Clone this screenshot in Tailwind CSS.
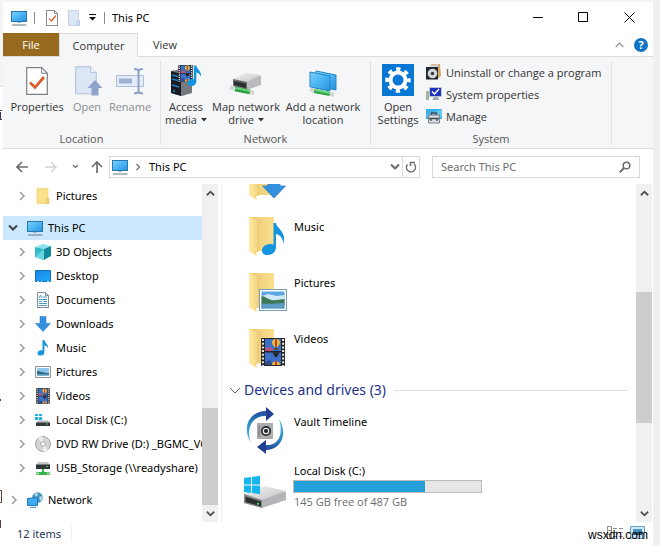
<!DOCTYPE html>
<html lang="en">
<head>
<meta charset="utf-8">
<meta name="viewport" content="width=device-width, initial-scale=1">
<title>This PC</title>
<script src="https://cdn.jsdelivr.net/npm/@tailwindcss/browser@4"></script>
</head>
<body class="flex h-screen overflow-hidden bg-white text-[11px] leading-4 text-black font-['Noto_Sans','Open_Sans',sans-serif]">

<!-- Shared icon definitions -->
<svg class="absolute h-0 w-0" aria-hidden="true">
  <defs>
    <linearGradient id="gScreen" x1="0" y1="0" x2="1" y2="1"><stop offset="0" stop-color="#7fd0fb"/><stop offset=".5" stop-color="#4bb4f3"/><stop offset="1" stop-color="#2391de"/></linearGradient>
    <linearGradient id="gDesk" x1="0" y1="0" x2="1" y2="1"><stop offset="0" stop-color="#1583e6"/><stop offset="1" stop-color="#22a9fb"/></linearGradient>
    <linearGradient id="gFlap" x1="0" x2="1"><stop offset="0" stop-color="#fdeaa8"/><stop offset="1" stop-color="#f4d57d"/></linearGradient>
    <linearGradient id="gBack" x1="0" x2="1"><stop offset="0" stop-color="#e9c871"/><stop offset="1" stop-color="#fae08f"/></linearGradient>
    <linearGradient id="gDisk" x1="0" x2="1" y2="1"><stop offset="0" stop-color="#f2f2f2"/><stop offset="1" stop-color="#c4c4c6"/></linearGradient>
    <linearGradient id="gArcL" x1="0" y1="1" x2="0" y2="0"><stop offset="0" stop-color="#4fc0e6"/><stop offset=".6" stop-color="#2f8fc8"/><stop offset="1" stop-color="#23479a"/></linearGradient>
    <linearGradient id="gArcR" x1="0" y1="0" x2="0" y2="1"><stop offset="0" stop-color="#4fc0e6"/><stop offset=".6" stop-color="#2f8fc8"/><stop offset="1" stop-color="#23479a"/></linearGradient>
    <symbol id="pc" viewBox="0 0 16 16"><rect x=".5" y="1.500" width="15" height="10" fill="url(#gScreen)" stroke="#2878ad"/><path d="M6 12.500h4" stroke="#9db8c8"/><path d="M1 15h14.500" stroke="#7d8a94" stroke-width="1.200"/></symbol>
    <symbol id="folder" viewBox="0 0 16 16"><path d="M2 .5h11v15H2z" fill="#fbe08a" stroke="#ecc968" stroke-width=".6"/><path d="M11.500 10.500h2.500v5h-2.500z" fill="#f5d374" stroke="#e3bd58" stroke-width=".6"/></symbol>
    <symbol id="bigfolder" viewBox="0 0 48 48"><path d="M5 4h25v34H12z" fill="url(#gBack)"/><path d="M5 4l9 4v36l-9-6z" fill="url(#gFlap)"/><path d="M14 8v31" stroke="#e3c069" stroke-width=".7"/><path d="M12 39h4v3l-3 3z" fill="#fff"/></symbol>
    <symbol id="note" viewBox="0 0 16 16"><path d="M7.500 0h1.800c.2 2.600 4.200 4 3.700 8.700-.6-2-1.800-3-3.600-3.400v6.900c0 2.100-1.800 3.400-3.900 3.400-1.800 0-3-1-3-2.400 0-1.700 1.800-3 3.700-3 .5 0 .9.100 1.300.200z" fill="#1493df"/></symbol>
    <symbol id="down" viewBox="0 0 16 16"><path d="M5 .5h6v7h4.500L8 15.500.5 7.500H5z" fill="#3390df" stroke="#2577c0" stroke-width=".5"/></symbol>
    <symbol id="pic" viewBox="0 0 28 22"><rect x=".5" y=".5" width="27" height="21" fill="#fff" stroke="#7a9cb5"/><path d="M2.500 2.500h23v17h-23z" fill="#5aa5e4"/><path d="M2.500 7l7-2 8 2 8-1v8h-23z" fill="#cfe8f6"/><path d="M2.500 7c3 0 6 3 10 4s9-1 13-1v6h-23z" fill="#3c7852"/><path d="M2.500 14.500c8 1 14-.5 23-.5v5.500h-23z" fill="#5c9cc4"/></symbol>
    <symbol id="film" viewBox="0 0 24 28"><path d="M0 0h24v28H0z" fill="#252529"/><path d="M1.900 1v27M22.100 1v27" stroke="#f1edda" stroke-width="2" stroke-dasharray="2 1.700"/><path d="M4 1h16v12H4zM4 14.500h16V27H4z" fill="#3a71c6"/><path d="M4 10l5-1 3 2v2H4z" fill="#b65480"/><path d="M15 1c5 0 5 5 1.500 8h-3C10 6 10 1 15 1z" fill="#e9bd35"/><path d="M14 1.200h2v7.600h-2z" fill="#c23e2c"/><path d="M13.500 10h3v2h-3z" fill="#653c1d"/><path d="M11.500 14.500h7L16 19h-2z" fill="#292520"/><path d="M4 24l5-2 3 5H4z" fill="#2c4a86"/><path d="M11 27c0-5 8-5 8 0z" fill="#e9bd35"/><path d="M14 23h2v4h-2z" fill="#c23e2c"/></symbol>
    <symbol id="chev" viewBox="0 0 8 10"><path d="M2 1l4 4-4 4" fill="none" stroke="currentColor" stroke-width="1.600"/></symbol>
    <symbol id="vee" viewBox="0 0 10 8"><path d="M1 1.500l4 4 4-4" fill="none" stroke="currentColor" stroke-width="2"/></symbol>
    <symbol id="caret" viewBox="0 0 6 4"><path d="M0 0h6L3 3.500z" fill="currentColor"/></symbol>
    <symbol id="page" viewBox="0 0 22 28"><path d="M.7.700h15l5.600 5.600v21H.7z" fill="#fff" stroke="#7b8086" stroke-width="1.200"/><path d="M15.700.700v5.600h5.600" fill="none" stroke="#7b8086"/><path d="M4 15.500l5 5L18 10" fill="none" stroke="#d9602c" stroke-width="2.800"/></symbol>
  </defs>
</svg>

<!-- Sliver of the page behind the window -->
<div class="w-[3px] shrink-0 bg-white" aria-hidden="true">
  <svg width="3" height="546"><path d="M0 0h3v86H0z" fill="#f4f4f5"/><path d="M0 86h3v1H0z" fill="#dcdfe2"/><path d="M0 110h2v1H0zM0 112h1v7h1v1H0z" fill="#46365c"/><path d="M0 399h1v2H0z" fill="#444"/><path d="M0 490.500h1.500v12H0" fill="none" stroke="#5a3f38"/><path d="M0 520h1v8H0z" fill="#5a3f48"/></svg>
</div>

<main class="flex min-w-0 flex-1 flex-col border-t-2 border-[#f4f4f4] bg-white">
  <!-- Title bar -->
  <header class="flex h-[31px] shrink-0 items-center pl-2">
    <svg class="h-4 w-4"><use href="#pc"/></svg>
    <span class="ml-[7px] h-3 w-px bg-[#8a8a8a]"></span>
    <button class="ml-[11px]" aria-label="Properties"><svg class="h-4 w-3" viewBox="0 0 12 16"><path d="M.5.500h8l3 3v12H.500z" fill="#fff" stroke="#8b8b8b"/><path d="M8.500.500v3h3" fill="none" stroke="#8b8b8b"/><path d="M3 8.500l2.500 2.500L10 5.500" fill="none" stroke="#e0673a" stroke-width="1.500"/></svg></button>
    <button class="ml-[10px]" aria-label="New folder"><svg class="h-4 w-3" viewBox="0 0 12 16"><path d="M.5.500h10v15H.500z" fill="#dde6f3" stroke="#c7d4e8"/><path d="M9 10.500h2.500v5H9z" fill="#d2deef" stroke="#bccbe2"/></svg></button>
    <button class="ml-[9px]" aria-label="Customize Quick Access Toolbar"><svg class="h-[7px] w-[7px]" viewBox="0 0 7 7"><path d="M0 .5h7" stroke="#111"/><path d="M0 3h7L3.500 6.500z" fill="#111"/></svg></button>
    <span class="ml-2 h-3 w-px bg-[#8a8a8a]"></span>
    <h1 class="ml-[7px]">This PC</h1>
    <div class="ml-auto flex h-full items-center">
      <button class="flex w-[45px] justify-center" aria-label="Minimize"><svg width="11" height="11"><path d="M0 5.500h10" stroke="#000"/></svg></button>
      <button class="flex w-[45px] justify-center" aria-label="Maximize"><svg width="11" height="11"><path d="M.5.500h9v9h-9z" fill="none" stroke="#000"/></svg></button>
      <button class="flex w-[47px] justify-center" aria-label="Close"><svg width="11" height="11"><path d="M.5.500l10 10M10.500.500l-10 10" stroke="#000"/></svg></button>
    </div>
  </header>

  <!-- Ribbon tabs -->
  <nav class="flex h-[23px] shrink-0 items-stretch text-[#333] font-['Open_Sans','Noto_Sans',sans-serif]">
    <button class="w-14 bg-[#986a1f] text-white">File</button>
    <button class="relative -mb-px w-[79px] border border-b-0 border-[#dadbdc] bg-[#f5f6f7]">Computer</button>
    <button class="w-[54px]">View</button>
    <div class="ml-auto flex items-center gap-[10px] pr-[5px]">
      <button aria-label="Minimize the Ribbon"><svg class="block" width="9" height="6"><path d="M.7 5l3.800-3.800L8.300 5" fill="none" stroke="#8f8f8f" stroke-width="1.200"/></svg></button>
      <button class="h-[14px] w-[14px] rounded-full bg-[#1272c4] text-[11px] leading-[14px] font-bold text-white" aria-label="Help">?</button>
    </div>
  </nav>

  <!-- Ribbon -->
  <section class="flex h-[93px] shrink-0 border-y border-[#dadbdc] bg-[#f5f6f7] pt-1 pb-[3px] leading-[13px] text-[#333] font-['Open_Sans','Noto_Sans',sans-serif]">
    <div class="flex w-[158px] flex-col border-r border-[#e2e3e4]">
      <div class="flex flex-1 pl-[5px]">
        <button class="flex w-[58px] flex-col items-center"><span class="flex h-[39px] items-center"><svg class="h-7 w-[22px]"><use href="#page"/></svg></span>Properties</button>
        <button class="flex w-[42px] flex-col items-center text-[#8b8b8b]"><span class="flex h-[39px] items-center"><svg class="ml-1 h-[30px] w-7" viewBox="0 0 28 30"><path d="M.7.700h15l5.600 5.600v21.500H.7z" fill="#dde6f5" stroke="#b1c0dc"/><path d="M15.700.700v5.600h5.600" fill="#f2f6fc" stroke="#b1c0dc"/><path d="M20 14l7.500 8h-4v7.500h-7V22h-4z" fill="#8ea3ca"/></svg></span>Open</button>
        <button class="flex w-[44px] flex-col items-center text-[#8b8b8b]"><span class="flex h-[39px] items-center"><svg class="h-7 w-7" viewBox="0 0 28 28"><path d="M.5 8.500h27v11H.500z" fill="#e6edf8" stroke="#aebedb"/><path d="M3 11.500h13v5H3z" fill="#9eb2d6"/><path d="M18 2c2.500 0 4 .7 4.500 1.700C23 2.700 24.500 2 27 2M18 26.500c2.500 0 4-.7 4.500-1.700.5 1 2 1.700 4.500 1.700M22.500 3v22" fill="none" stroke="#8fa2c3" stroke-width="2"/></svg></span>Rename</button>
      </div>
      <div class="text-center text-[#555]">Location</div>
    </div>
    <div class="flex w-[210px] flex-col border-r border-[#e2e3e4]">
      <div class="flex flex-1 pl-0.5">
        <button class="flex w-[46px] flex-col items-center"><span class="flex h-[39px] items-center"><svg class="h-8 w-8" viewBox="0 0 32 32"><path d="M1 6l11-2 10 4v20l-10 3-11-3z" fill="#77797e"/><path d="M1 6l10 3v22L1 28z" fill="#171c24"/><path d="M2 10l8 2M2 14l8 2M2 20l7 2" stroke="#237cc4" stroke-width="1.500"/><path d="M3 26h2" stroke="#35cfff"/><svg x="8" y="0" width="15" height="17"><use href="#film"/></svg><svg x="14" y="0" width="21" height="22"><use href="#note"/></svg></svg></span>Access<span class="flex items-center gap-1">media <svg class="h-1 w-1.5"><use href="#caret"/></svg></span></button>
        <button class="flex w-[74px] flex-col items-center"><span class="flex h-[39px] items-center pt-1.5"><svg class="h-6 w-[34px]" viewBox="0 0 34 24"><path d="M4 8L17 2l15 2v9L18 18 4 14z" fill="#b9babd"/><path d="M4 7L17 1l15 2-14 7z" fill="url(#gDisk)"/><path d="M4 7l14 3v8L4 14z" fill="#6b6d6e"/><path d="M5 9l12 2.500v4.500L5 13z" fill="#2c2e2f"/><path d="M6 17l15 3" stroke="#279b42" stroke-width="4.500"/><path d="M6 16l15 3" stroke="#65d077" stroke-width="2"/><path d="M1 15l4 2M21 20l4 1" stroke="#d1d7cf" stroke-width="4"/></svg></span><span class="whitespace-nowrap">Map network</span><span class="flex items-center gap-1">drive <svg class="h-1 w-1.5"><use href="#caret"/></svg></span></button>
        <button class="flex w-[80px] flex-col items-center"><span class="flex h-[39px] items-center pt-1"><svg class="h-7 w-7" viewBox="0 0 28 28"><path d="M7 2l20 4v15L7 17z" fill="url(#gScreen)" stroke="#2787c5"/><path d="M1 3l20 4v15L1 18z" fill="url(#gScreen)" stroke="#2787c5"/><path d="M5 22l16 3" stroke="#2da447" stroke-width="4"/><path d="M6 21l15 3" stroke="#69d77d" stroke-width="2"/><path d="M1 20l4 2M21 25l4 1" stroke="#d1d7cf" stroke-width="4"/></svg></span><span class="whitespace-nowrap">Add a network</span>location</button>
      </div>
      <div class="text-center text-[#555]">Network</div>
    </div>
    <div class="flex w-[241px] flex-col border-r border-[#e2e3e4]">
      <div class="flex flex-1 pl-1">
        <button class="flex w-[46px] flex-col items-center"><span class="h-[39px] pt-[3px]"><svg class="h-8 w-8" viewBox="0 0 32 32"><path d="M0 0h32v32H0z" fill="#0878d4"/><circle cx="16" cy="16" r="7.500" fill="none" stroke="#fff" stroke-width="4"/><circle cx="16" cy="16" r="10.700" fill="none" stroke="#fff" stroke-width="4" stroke-dasharray="4.200 4.200" stroke-dashoffset="2.100"/></svg></span>Open<span>Settings</span></button>
        <div class="flex flex-col pl-[5px]">
          <button class="flex h-[22px] items-center gap-1"><svg class="h-4 w-4" viewBox="0 0 16 16"><path d="M5 0h9l1 12-4 3z" fill="#d9a968"/><path d="M3 2l9-2v12z" fill="#ccd6db"/><path d="M0 3h12v12.500H0z" fill="#24272a"/><circle cx="6.500" cy="9.500" r="4.800" fill="#d4d7d9"/><circle cx="6.500" cy="9.500" r="1.700" fill="#33383b"/></svg><span class="whitespace-nowrap">Uninstall or change a program</span></button>
          <button class="flex h-[22px] items-center gap-1"><svg class="h-4 w-4" viewBox="0 0 16 16"><path d="M0 5h3v9H0z" fill="#a5b29e"/><path d="M3.500 1.500h12v9h-12z" fill="#1e35b8" stroke="#bdc5d1"/><path d="M6 5.500l2.500 2.500L13 3" stroke="#fff" stroke-width="1.500" fill="none"/><path d="M8 11h4l1 3H6z" fill="#a4abb6"/></svg>System properties</button>
          <button class="flex h-[22px] items-center gap-1"><svg class="h-4 w-4" viewBox="0 0 16 16"><path d="M0 1h16v10H0z" fill="#3bb2ed"/><path d="M0 8L16 1v8z" fill="#65caf6"/><path d="M2.500 7h11v8h-11z" fill="#d9dcdf" stroke="#7a848c"/><path d="M5.500 7V5h5v2M3 10.500h10M5 10v3M11 10v3" fill="none" stroke="#434c54" stroke-width="1.300"/></svg>Manage</button>
        </div>
      </div>
      <div class="text-center text-[#555]">System</div>
    </div>
  </section>

  <!-- Address row -->
  <div class="flex h-[35px] shrink-0 items-center pr-[13px] pl-3 text-[#6d6d6d]">
    <button class="ml-px" aria-label="Back"><svg class="h-3 w-3" viewBox="0 0 12 12"><path d="M12 6H1M6 1L1 6l5 5" fill="none" stroke="currentColor" stroke-width="1.700"/></svg></button>
    <button class="ml-[17px] text-[#d4d4d4]" aria-label="Forward" disabled><svg class="h-3 w-3" viewBox="0 0 12 12"><path d="M0 6h11M6 1l5 5-5 5" fill="none" stroke="currentColor" stroke-width="1.500"/></svg></button>
    <button class="ml-[15px]" aria-label="Recent locations"><svg class="h-[5px] w-[7px]"><use href="#vee"/></svg></button>
    <button class="ml-3" aria-label="Up"><svg class="h-3 w-3" viewBox="0 0 12 12"><path d="M6 12V1M1 6l5-5 5 5" fill="none" stroke="currentColor" stroke-width="1.700"/></svg></button>
    <div class="ml-1.5 flex h-[22px] min-w-0 flex-1 items-center border border-[#d9d9d9] pl-0.5">
      <svg class="h-4 w-4"><use href="#pc"/></svg>
      <svg class="ml-[7px] h-2 w-1.5"><use href="#chev"/></svg>
      <button class="ml-2 text-black">This PC</button>
      <button class="mr-0.5 ml-auto" aria-label="Previous locations"><svg class="h-2 w-[10px]"><use href="#vee"/></svg></button>
      <button class="flex h-full w-[17px] items-center justify-center border-l border-[#d9d9d9]" aria-label="Refresh"><svg class="h-3 w-3" viewBox="0 0 12 12"><path d="M2.500 3.500A4.500 4.500 0 1 0 9 3M5.500.800V5M5.500 1.500H10" fill="none" stroke="currentColor" stroke-width="1.500"/></svg></button>
    </div>
    <label class="ml-3 flex h-[22px] w-[208px] items-center border border-[#d9d9d9] px-2">
      <input class="min-w-0 flex-1 outline-none placeholder:text-[#6d6d6d]" type="text" placeholder="Search This PC" aria-label="Search This PC">
      <svg class="h-3 w-3" viewBox="0 0 12 12"><circle cx="7.500" cy="4.500" r="3.300" fill="none" stroke="currentColor" stroke-width="1.500"/><path d="M5 7L.8 11.200" stroke="currentColor" stroke-width="2"/></svg>
    </label>
  </div>

  <div class="flex min-h-0 flex-1">
    <!-- Navigation tree -->
    <nav class="w-[199px] shrink-0 overflow-hidden whitespace-nowrap text-[#a0a0a0]">
      <ul>
        <li class="mb-2"><button class="flex h-6 w-full items-center pl-[15px]"><svg class="h-[10px] w-2 shrink-0"><use href="#chev"/></svg><svg class="mr-[5px] ml-[9px] h-4 w-4 shrink-0"><use href="#folder"/></svg><span class="text-black">Pictures</span></button></li>
        <li><button class="flex h-6 w-full items-center bg-[#cce8ff] pl-[5px]"><svg class="h-2 w-[10px] shrink-0 text-[#404040]"><use href="#vee"/></svg><svg class="mr-[5px] ml-[9px] h-4 w-4 shrink-0"><use href="#pc"/></svg><span class="text-black">This PC</span></button></li>
        <li><button class="flex h-6 w-full items-center pl-[15px]"><svg class="h-[10px] w-2 shrink-0"><use href="#chev"/></svg><svg class="mr-[5px] ml-[9px] h-4 w-4 shrink-0" viewBox="0 0 16 16"><path d="M0 3l8-3 8 2-7 3z" fill="#8ce4ee"/><path d="M0 3l9 2v11l-9-3z" fill="#35bccb"/><path d="M9 5l7-3v10l-7 4z" fill="#128a9b"/><path d="M0 13l9-8v11z" fill="#68d5df"/></svg><span class="text-black">3D Objects</span></button></li>
        <li><button class="flex h-6 w-full items-center pl-[15px]"><svg class="h-[10px] w-2 shrink-0"><use href="#chev"/></svg><svg class="mr-[5px] ml-[9px] h-4 w-4 shrink-0" viewBox="0 0 16 16"><path d="M.5 2.500h15v11H.500z" fill="url(#gDesk)" stroke="#1270bb"/><path d="M2 13.500h2M6 13.500h1M12 13.500h2" stroke="#bde7ff"/></svg><span class="text-black">Desktop</span></button></li>
        <li><button class="flex h-6 w-full items-center pl-[15px]"><svg class="h-[10px] w-2 shrink-0"><use href="#chev"/></svg><svg class="mr-[5px] ml-[9px] h-4 w-4 shrink-0" viewBox="0 0 16 16"><path d="M2.500.500h8l3 3v12h-11z" fill="#fff" stroke="#818b91"/><path d="M10.500.500v3h3" fill="none" stroke="#818b91"/><path d="M4 6l1.500-3L7 6M8 5h4M4 7.500h8M4 9.500h3M8.500 9.500H12M4 11.500h8M4 13.500h8" fill="none" stroke="#4a9bc0"/></svg><span class="text-black">Documents</span></button></li>
        <li><button class="flex h-6 w-full items-center pl-[15px]"><svg class="h-[10px] w-2 shrink-0"><use href="#chev"/></svg><svg class="mr-[5px] ml-[9px] h-4 w-4 shrink-0"><use href="#down"/></svg><span class="text-black">Downloads</span></button></li>
        <li><button class="flex h-6 w-full items-center pl-[15px]"><svg class="h-[10px] w-2 shrink-0"><use href="#chev"/></svg><svg class="mr-[5px] ml-[9px] h-4 w-4 shrink-0"><use href="#note"/></svg><span class="text-black">Music</span></button></li>
        <li><button class="flex h-6 w-full items-center pl-[15px]"><svg class="h-[10px] w-2 shrink-0"><use href="#chev"/></svg><svg class="mr-[5px] ml-[9px] h-4 w-4 shrink-0" viewBox="0 0 16 16"><path d="M.5 2.500h15v11H.500z" fill="#fff" stroke="#8c9297"/><path d="M2 4h12v8H2z" fill="#8dc5ed"/><path d="M2 7c4 0 6 2 12 2v3H2z" fill="#386c83"/><path d="M2 10.500h12V12H2z" fill="#78b4d8"/></svg><span class="text-black">Pictures</span></button></li>
        <li><button class="flex h-6 w-full items-center pl-[15px]"><svg class="h-[10px] w-2 shrink-0"><use href="#chev"/></svg><svg class="mr-[5px] ml-[9px] h-4 w-4 shrink-0"><use href="#film"/></svg><span class="text-black">Videos</span></button></li>
        <li><button class="flex h-6 w-full items-center pl-[15px]"><svg class="h-[10px] w-2 shrink-0"><use href="#chev"/></svg><svg class="mr-[5px] ml-[9px] h-4 w-4 shrink-0" viewBox="0 0 16 16"><path d="M0 2h3v2H0zM4 2h3v2H4zM0 5h3v3H0zM4 5h3v3H4z" fill="#17b3e8"/><path d="M3 8.500h10l2 2.500H1z" fill="#b9bcbe"/><path d="M1 10.500h14V14H1z" fill="#33393b"/><path d="M11 12h2" stroke="#49d44d"/></svg><span class="text-black">Local Disk (C:)</span></button></li>
        <li><button class="flex h-6 w-full items-center pl-[15px]"><svg class="h-[10px] w-2 shrink-0"><use href="#chev"/></svg><svg class="mr-[5px] ml-[9px] h-4 w-4 shrink-0" viewBox="0 0 16 16"><circle cx="8" cy="8" r="7.500" fill="#d3d5d6" stroke="#a2a5a7"/><path d="M8 8L3 2a7 7 0 0 1 5-1.500zM8 8l5 6a7 7 0 0 1-5 1.500z" fill="#efefef"/><circle cx="8" cy="8" r="2.400" fill="#f8f8f8" stroke="#a5a5a5"/></svg><span class="text-black">DVD RW Drive (D:) _BGMC_VOL</span></button></li>
        <li class="mb-2"><button class="flex h-6 w-full items-center pl-[15px]"><svg class="h-[10px] w-2 shrink-0"><use href="#chev"/></svg><svg class="mr-[5px] ml-[9px] h-4 w-4 shrink-0" viewBox="0 0 16 16"><path d="M3 2h10l2 3H1z" fill="#c3c6c8"/><path d="M1 4.500h14V9H1z" fill="#30363a"/><path d="M11 6.500h2" stroke="#49d44d"/><path d="M7 9h2v3h6v3H1v-3h6z" fill="#37b14c"/><path d="M1 13.500h3M12 13.500h3" stroke="#a7d9ad" stroke-width="2"/></svg><span class="text-black">USB_Storage (\\readyshare)</span></button></li>
        <li><button class="flex h-6 w-full items-center pl-[7px]"><svg class="h-[10px] w-2 shrink-0"><use href="#chev"/></svg><svg class="mr-[5px] ml-[9px] h-4 w-4 shrink-0" viewBox="0 0 16 16"><circle cx="10.500" cy="5.500" r="5.300" fill="#3f91bd"/><path d="M7 2c2-2 5-1 4 1L9 5zM12 5l3-1c1 3-1 5-2 5z" fill="#a8d9e5"/><path d="M.5 6.500l10-1v8H.500z" fill="#3fabf0" stroke="#2474b5"/><path d="M3 15.500h6" stroke="#4596cf"/></svg><span class="text-black">Network</span></button></li>
      </ul>
    </nav>
    <div class="flex w-4 shrink-0 flex-col items-center bg-[#f0f0f0] text-[#505050]" role="presentation">
      <svg class="mt-[5px] h-2 w-[9px] shrink-0 rotate-180"><use href="#vee"/></svg>
      <div class="flex-[210]"></div>
      <div class="w-full flex-[97] bg-[#cdcdcd]"></div>
      <svg class="mt-[5px] mb-1 h-2 w-[9px] shrink-0"><use href="#vee"/></svg>
    </div>

    <!-- Item list -->
    <section class="ml-[3px] flex min-w-0 flex-1 flex-col justify-end overflow-hidden border-l border-[#f0f0f0] pb-[7px]">
      <div class="flex h-14 shrink-0 items-start pt-1 pl-[22px]"><svg class="h-12 w-12" viewBox="0 0 48 48" role="img" aria-label="Downloads"><use href="#bigfolder" width="48" height="48"/><path d="M24 17h12v12h5.500L30 41 18.500 29H24z" fill="#3390df" stroke="#2577c0" stroke-width=".7"/></svg></div>
      <div class="flex h-14 shrink-0 items-start gap-0.5 pt-1 pl-[22px]"><svg class="h-12 w-12" viewBox="0 0 48 48"><use href="#bigfolder" width="48" height="48"/><path d="M29.500 10h2.500c1 6 11 9 7.500 21-.5-5-3-9-7.500-10v13c0 5-4 8-8.500 8-4 0-5.500-2.300-5.500-4.600 0-3.800 4-6.400 8-6.400 1.300 0 2.500.2 3.500.6z" fill="#1493df"/></svg><span class="pt-1.5">Music</span></div>
      <div class="flex h-14 shrink-0 items-start gap-0.5 pt-1 pl-[22px]"><svg class="h-12 w-12" viewBox="0 0 48 48"><use href="#bigfolder" width="48" height="48"/><use href="#pic" x="15" y="20" width="28" height="22"/></svg><span class="pt-1.5">Pictures</span></div>
      <div class="flex h-14 shrink-0 items-start gap-0.5 pt-1 pl-[22px]"><svg class="h-12 w-12" viewBox="0 0 48 48"><use href="#bigfolder" width="48" height="48"/><use href="#film" x="17" y="13" width="24" height="28"/></svg><span class="pt-1.5">Videos</span></div>
      <h2 class="flex h-[26px] shrink-0 items-center pr-2 pl-[7px] text-[14px] leading-5 text-[#1e3287]"><svg class="mr-[3px] h-[7px] w-3" viewBox="0 0 12 7"><path d="M1 1l5 5 5-5" fill="none" stroke="#606060"/></svg>Devices and drives (3)<span class="ml-2 h-px flex-1 bg-[#e0e0e0]"></span></h2>
      <div class="flex h-14 shrink-0 items-start gap-0.5 pt-1 pl-[22px]"><svg class="h-12 w-12" viewBox="0 0 48 48"><path d="M7 36C-3 20 6 4 22 4v5C10 8 1 20 7 36z" fill="url(#gArcL)"/><path d="M35 12c10 16 1 31-13 31v-5c12 1 18-10 13-26z" fill="url(#gArcR)"/><path d="M22 0l8 7-8 7zM22 47l-9-7 9-7z" fill="#243f91"/><path d="M13 16h16v16H13z" fill="#aaadb0"/><path d="M15 18v12" stroke="#777"/><circle cx="22" cy="24" r="5" fill="#222"/><circle cx="22" cy="24" r="2.700" fill="none" stroke="#e9e9e9" stroke-width="1.300"/></svg><span class="pt-[7px]">Vault Timeline</span></div>
      <div class="flex h-14 shrink-0 items-start gap-px pt-1 pl-[22px]">
        <svg class="h-12 w-12" viewBox="0 0 48 48"><path d="M0 32l20-8 22 5v8L18 45 0 40z" fill="#b4b5b8"/><path d="M0 31l20-8 22 5-24 9z" fill="url(#gDisk)"/><path d="M0 31l18 6v8L0 40z" fill="#85878a"/><path d="M1.500 33.500L17 38.500v5L1.500 39z" fill="#2b302e"/><path d="M13 39.500l2 .6v2l-2-.6z" fill="#52d45c"/><path d="M0 15l7-1v7.500H0zM8 14l8-1.300v8.800H8zM0 22.500h7V30l-7-1zM8 22.500h8v8.700L8 30z" fill="#14b4ec"/></svg>
        <div class="flex w-[189px] flex-col"><span class="pl-px">Local Disk (C:)</span>
          <div class="my-px h-[13px] border border-[#bcbcbc] bg-[#e6e6e6]" role="meter" aria-label="Disk space used" aria-valuemin="0" aria-valuemax="487" aria-valuenow="342"><div class="h-full bg-[#26a0da]" style="width:70.2%"></div></div>
          <span class="pl-px text-[#6d6d6d] font-['Open_Sans','Noto_Sans',sans-serif]">145 GB free of 487 GB</span></div>
      </div>
    </section>
    <div class="flex w-4 shrink-0 flex-col items-center bg-[#f0f0f0] text-[#505050]" role="presentation">
      <svg class="mt-[5px] h-2 w-[9px] shrink-0 rotate-180"><use href="#vee"/></svg>
      <div class="flex-[95]"></div>
      <div class="w-full flex-[130] bg-[#cdcdcd]"></div>
      <div class="flex-[82]"></div>
      <svg class="mt-[5px] mb-1 h-2 w-[9px] shrink-0"><use href="#vee"/></svg>
    </div>
    <div class="w-px shrink-0 bg-white"></div>
  </div>

  <!-- Status bar -->
  <footer class="relative flex h-6 shrink-0 items-center pr-2 pl-[14px] text-[#26365c]">
    <span>12 items</span><span class="ml-[10px] h-4 w-px bg-[#f0f0f0]"></span>
    <div class="ml-auto flex gap-[7px] pb-1">
      <button aria-label="Details view"><svg class="block" width="16" height="13"><path d="M.5.500h4v12h-4zM.5 4.500h4M.5 8.500h4" fill="#fff" stroke="#8d8d8d"/><path d="M6 2.500h4M12 2.500h4M6 6.500h4M12 6.500h4M6 10.500h4M12 10.500h4" stroke="#8d8d8d"/></svg></button>
      <button aria-label="Large icons view"><svg class="block" width="15" height="13"><path d="M.5.500h14v12H.500z" fill="#cde8fa" stroke="#6f9fc0"/><path d="M3 3h9v6H3z" fill="#4a91c4"/><path d="M3 7l9-2v4H3z" fill="#255f85"/></svg></button>
    </div>
    <span class="absolute right-[5px] bottom-[3px] text-[12px] text-black font-['Liberation_Sans',sans-serif]">wsxdn.com</span>
  </footer>
</main>

<div class="w-[7px] shrink-0 bg-[#f0f0f0]" aria-hidden="true"></div>
</body>
</html>
